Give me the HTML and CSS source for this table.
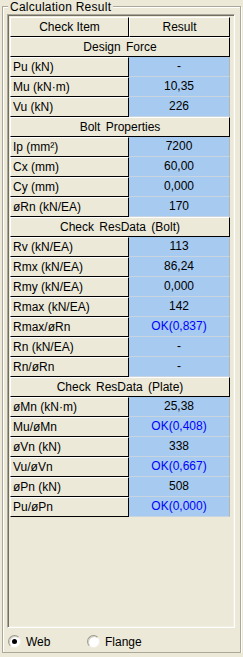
FILE: index.html
```html
<!DOCTYPE html>
<html lang="en">
<head>
    <meta charset="UTF-8">
    <meta name="viewport" content="width=device-width, initial-scale=1.0">
    <title>Calculation Result</title>
    <link rel="stylesheet" href="styles.css">
</head>
<body>
    <div class="groupbox">
        <span class="legend">Calculation Result</span>

        <div class="panel">
            <div class="grid">
                <div class="head">Check Item</div>
                <div class="head">Result</div>

                <div class="section">Design Force</div>
                <div class="label">Pu (kN)</div><div class="value">-</div>
                <div class="label">Mu (kN·m)</div><div class="value">10,35</div>
                <div class="label">Vu (kN)</div><div class="value">226</div>

                <div class="section">Bolt Properties</div>
                <div class="label">Ip (mm²)</div><div class="value">7200</div>
                <div class="label">Cx (mm)</div><div class="value">60,00</div>
                <div class="label">Cy (mm)</div><div class="value">0,000</div>
                <div class="label">øRn (kN/EA)</div><div class="value">170</div>

                <div class="section">Check ResData (Bolt)</div>
                <div class="label">Rv (kN/EA)</div><div class="value">113</div>
                <div class="label">Rmx (kN/EA)</div><div class="value">86,24</div>
                <div class="label">Rmy (kN/EA)</div><div class="value">0,000</div>
                <div class="label">Rmax (kN/EA)</div><div class="value">142</div>
                <div class="label">Rmax/øRn</div><div class="value ok">OK(0,837)</div>
                <div class="label">Rn (kN/EA)</div><div class="value">-</div>
                <div class="label">Rn/øRn</div><div class="value">-</div>

                <div class="section">Check ResData (Plate)</div>
                <div class="label">øMn (kN·m)</div><div class="value">25,38</div>
                <div class="label">Mu/øMn</div><div class="value ok">OK(0,408)</div>
                <div class="label">øVn (kN)</div><div class="value">338</div>
                <div class="label">Vu/øVn</div><div class="value ok">OK(0,667)</div>
                <div class="label">øPn (kN)</div><div class="value">508</div>
                <div class="label">Pu/øPn</div><div class="value ok">OK(0,000)</div>
            </div>
        </div>

        <div class="options">
            <label class="option"><span class="radio checked"></span>Web</label>
            <label class="option"><span class="radio"></span>Flange</label>
        </div>
    </div>
</body>
</html>
```

FILE: styles.css
```css
* {
    box-sizing: border-box;
}
body {
    margin: 0;
    background-color: #ece9d8;
    font-family: "Liberation Sans", Arial, sans-serif;
    font-size: 12px;
    color: #000;
}

/* etched group frame */
.groupbox {
    position: relative;
    margin: 6px 2px 0 2px;
    width: 239px;
    height: 647px;
    border: 1px solid #aca899;
    box-shadow: inset 1px 1px 0 #fff, 1px 1px 0 #fff;
}
.legend {
    position: absolute;
    top: -7px;
    left: 5px;
    padding: 0 2px;
    line-height: 14px;
    letter-spacing: 0.25px;
    background-color: #ece9d8;
}

/* sunken container around the grid */
.panel {
    margin: 7px 0 0 4px;
    width: 228px;
    height: 614px;
    border: 1px solid;
    border-color: #aca899 #fff #fff #aca899;
    box-shadow: inset 1px 1px 0 #716f64, inset -1px -1px 0 #f1efe2;
    padding: 2px 0 0 2px;
}

.grid {
    display: grid;
    grid-template-columns: 119px 101px;
    grid-auto-rows: 20px;
}
.head, .section, .label {
    border-top: 1px solid #fff;
    border-left: 1px solid #fff;
    border-right: 1px solid #000;
    border-bottom: 1px solid #000;
    line-height: 18px;
    white-space: nowrap;
}
.head, .section {
    text-align: center;
}
.section {
    grid-column: 1 / 3;
    word-spacing: 2px;
}
.label {
    padding-left: 2px;
}
.value {
    background-color: #a6caf0;
    border-right: 1px solid #b4b4b4;
    border-bottom: 1px solid #c8d4e0;
    line-height: 19px;
    text-align: center;
}
.value.ok {
    color: #0000ff;
}

/* radio buttons under the grid */
.options {
    display: flex;
    margin: 7px 0 0 5px;
}
.option {
    display: flex;
    align-items: center;
    gap: 5px;
    width: 79px;
    height: 13px;
}
.radio {
    position: relative;
    width: 13px;
    height: 13px;
    border-radius: 50%;
    background-color: #fff;
    border: 1px solid;
    border-color: #9d9a8a #f1efe2 #f1efe2 #9d9a8a;
    box-shadow: inset 1px 1px 0 #d4d0c8;
}
.radio.checked::after {
    content: "";
    position: absolute;
    left: 3px;
    top: 3px;
    width: 5px;
    height: 5px;
    border-radius: 50%;
    background-color: #000;
}
```
